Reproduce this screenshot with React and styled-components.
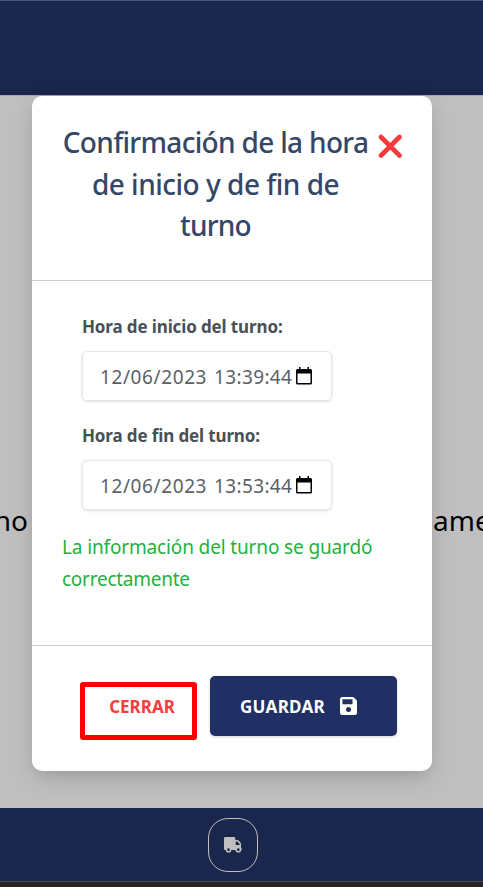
import React from "react";
import styled, { createGlobalStyle } from "styled-components";

const GlobalStyle = createGlobalStyle`
  * { box-sizing: border-box; }
  html, body { margin: 0; overflow: hidden; background: #bfbfbf; }
  body { font-family: "Noto Sans", "Open Sans", sans-serif; }
  button { font-family: inherit; }
`;

const Page = styled.div`
  position: relative;
  display: grid;
  grid-template-rows: 95px 713px 73px 6px;
  width: 483px;
  height: 887px;
  overflow: hidden;
  background: #bfbfbf;
`;
const Header = styled.header`
  background: #1a264c;
  border-top: 1px solid #47547a;
`;
const Main = styled.main`
  display: flex;
  align-items: center;
  justify-content: space-between;
  padding-top: 135px;
  border-top: 1px solid #a5a7b0;
  color: #000;
  font-size: 28px;
  line-height: 42px;
`;
const Fragment = styled.span`
  display: flex;
  justify-content: ${(p) => (p.$end ? "flex-end" : "flex-start")};
  width: ${(p) => (p.$end ? 28 : 50)}px;
  overflow: hidden;
  white-space: nowrap;
`;
const Footer = styled.footer`
  display: flex;
  align-items: center;
  justify-content: center;
  padding-right: 17px;
  background: #1a264c;
`;
const TruckButton = styled.button`
  display: flex;
  align-items: center;
  justify-content: center;
  width: 50px;
  height: 54px;
  padding: 0;
  border: 1px solid #bfbfbf;
  border-radius: 20px;
  background: transparent;
  color: #bfbfbf;
`;
const Taskbar = styled.div`
  background: #262524;
  border-top: 1px solid #504f4e;
`;
const Dialog = styled.section`
  position: absolute;
  top: 96px;
  left: 32px;
  display: grid;
  grid-template-rows: 185px 364px 126px;
  width: 400px;
  height: 675px;
  border-radius: 10px;
  background: #fff;
  box-shadow: 0 8px 26px -4px rgba(0, 0, 0, 0.18), 0 6px 12px -5px rgba(0, 0, 0, 0.08);
`;
const DialogHeader = styled.header`
  display: flex;
  align-items: flex-start;
  padding: 26px 29px 0 30px;
  border-bottom: 1px solid #c5d0d8;
`;
const Title = styled.h1`
  width: 307px;
  margin: 0;
  color: #344767;
  font-size: 28px;
  font-weight: 500;
  line-height: 41.6px;
  text-align: center;
`;
const Line = styled.span`
  display: block;
  white-space: nowrap;
  letter-spacing: ${(p) => p.$spacing || 0}px;
`;
const CloseButton = styled.button`
  display: flex;
  margin: 12px 0 0 9px;
  padding: 0;
  border: 0;
  background: transparent;
`;
const DialogBody = styled.div`
  padding: 30px 30px 0;
`;
const Field = styled.label`
  display: block;
  width: 250px;
  height: 109px;
  margin-left: 20px;
`;
const FieldLabel = styled(Line)`
  margin-bottom: 9px;
  color: #495057;
  font-size: 17px;
  font-weight: 700;
  line-height: 31px;
`;
const DateInput = styled.div`
  display: flex;
  align-items: center;
  justify-content: space-between;
  width: 250px;
  height: 50px;
  padding: 0 19px 1px 17px;
  border: 1px solid #e4e5e7;
  border-radius: 5px;
  box-shadow: 0 1px 3px rgba(0, 0, 0, 0.13);
  color: #5b6168;
  font-size: 19px;
  font-weight: 400;
`;
const DateParts = styled.span`
  display: flex;
  gap: 7px;
  padding-top: 3px;
  white-space: nowrap;
`;
const Message = styled.p`
  margin: 0;
  padding-top: 2px;
  color: #1fb141;
  font-size: 19px;
  line-height: 32px;
`;
const DialogFooter = styled.footer`
  display: flex;
  align-items: flex-start;
  justify-content: flex-end;
  gap: 12px;
  padding: 30px 35px 0 0;
  border-top: 1px solid #c5d0d8;
`;
const ActionButton = styled.button`
  position: relative;
  display: flex;
  align-items: center;
  justify-content: ${(p) => (p.$primary ? "flex-start" : "center")};
  gap: 15px;
  width: ${(p) => (p.$primary ? 187 : 112)}px;
  height: 60px;
  padding: ${(p) => (p.$primary ? "0 0 0 30px" : "0")};
  border: 0;
  border-radius: 5px;
  background: ${(p) => (p.$primary ? "#213064" : "transparent")};
  box-shadow: ${(p) => (p.$primary ? "0 1px 3px rgba(0,0,0,.18)" : "none")};
  color: ${(p) => (p.$primary ? "#fff" : "#f53d3d")};
  font-size: 17px;
  font-weight: 700;
`;
const Highlight = styled.span`
  position: absolute;
  top: 6px;
  left: -6px;
  width: 117px;
  height: 58px;
  border: 5px solid #f00;
  border-radius: 3px;
`;

const CloseIcon = () => (
  <svg width="25" height="25" viewBox="0 0 25 25" fill="none" stroke="#f93a3a" strokeWidth="4.6" strokeLinecap="round">
    <path d="M3 3 21.5 21.5M21.5 3 3 21.5" />
  </svg>
);
const CalendarIcon = () => (
  <svg width="16" height="18" viewBox="0 0 16 18" fill="#000">
    <path d="M1.5 2H3V0H4.5V2H11.5V0H13V2H14.5Q16 2 16 3.5V16Q16 17.5 14.5 17.5H1.5Q0 17.5 0 16V3.5Q0 2 1.5 2ZM1.5 6.5V16H14.5V6.5Z" fillRule="evenodd" />
  </svg>
);
const SaveIcon = () => (
  <svg width="17" height="18" viewBox="0 0 17 18" fill="currentColor">
    <path d="M2.5 0H12.5Q13.4 0 14 .6L16.4 3Q17 3.6 17 4.5V15.5Q17 18 14.5 18H2.5Q0 18 0 15.5V2.5Q0 0 2.5 0ZM2.4 2.3V7.2H12.5V2.3ZM8.5 10A2.5 2.5 0 1 0 8.5 15A2.5 2.5 0 1 0 8.5 10Z" fillRule="evenodd" />
  </svg>
);
const TruckIcon = () => (
  <svg width="18" height="16" viewBox="0 0 18 16" fill="currentColor">
    <path d="M1.2 0H10Q11.3 0 11.3 1.2V3H13.2Q14 3 14.6 3.6L16.5 5.6Q17 6.1 17 7V11.3Q18 11.3 18 12.2Q18 13 17.2 13H1.2Q0 13 0 11.8V1.2Q0 0 1.2 0ZM11.7 4.5V8H15.6V7L13.2 4.5Z" fillRule="evenodd" />
    <circle cx="4.5" cy="12.7" r="2.1" fill="#1a264c" stroke="currentColor" strokeWidth="1.5" />
    <circle cx="14.3" cy="12.7" r="2.1" fill="#1a264c" stroke="currentColor" strokeWidth="1.5" />
  </svg>
);

const DateField = ({ label, date, time }) => (
  <Field>
    <FieldLabel $spacing={-0.13}>{label}</FieldLabel>
    <DateInput>
      <DateParts>
        <Line $spacing={0.6}>{date}</Line>
        <Line $spacing={0.35}>{time}</Line>
      </DateParts>
      <CalendarIcon />
    </DateInput>
  </Field>
);

export default function App() {
  return (
    <>
      <GlobalStyle />
      <Page>
        <Header />
        <Main>
          <Fragment $end>no</Fragment>
          <Fragment>ame</Fragment>
        </Main>
        <Footer>
          <TruckButton aria-label="Turno"><TruckIcon /></TruckButton>
        </Footer>
        <Taskbar />
        <Dialog role="dialog">
          <DialogHeader>
            <Title>
              <Line $spacing={-0.68}>Confirmación de la hora</Line>
              <Line $spacing={-0.5}>de inicio y de fin de</Line>
              <Line $spacing={-0.8}>turno</Line>
            </Title>
            <CloseButton aria-label="Cerrar"><CloseIcon /></CloseButton>
          </DialogHeader>
          <DialogBody>
            <DateField label="Hora de inicio del turno:" date="12/06/2023" time="13:39:44" />
            <DateField label="Hora de fin del turno:" date="12/06/2023" time="13:53:44" />
            <Message>
              <Line $spacing={-0.14}>La información del turno se guardó</Line>
              <Line $spacing={-0.25}>correctamente</Line>
            </Message>
          </DialogBody>
          <DialogFooter>
            <ActionButton>
              <Line $spacing={0}>CERRAR</Line>
              <Highlight />
            </ActionButton>
            <ActionButton $primary>
              <Line $spacing={0.3}>GUARDAR</Line>
              <SaveIcon />
            </ActionButton>
          </DialogFooter>
        </Dialog>
      </Page>
    </>
  );
}
